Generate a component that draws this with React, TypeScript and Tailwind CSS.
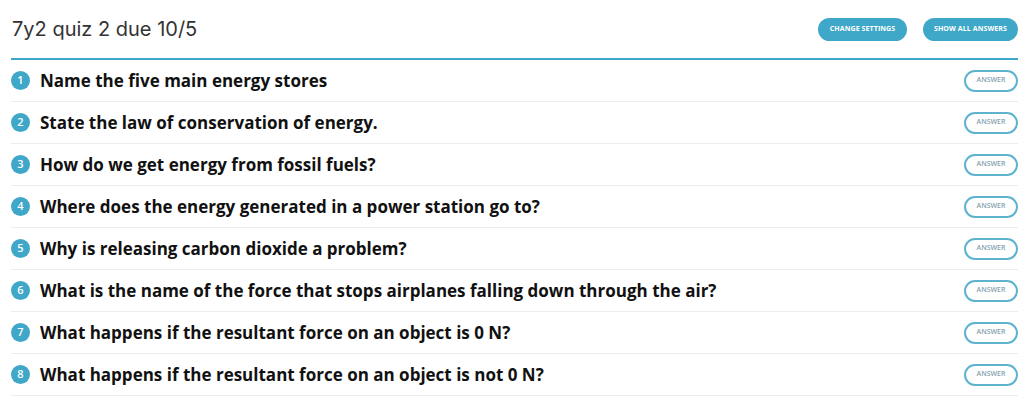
import React from 'react';

const questions = [
  'Name the five main energy stores',
  'State the law of conservation of energy.',
  'How do we get energy from fossil fuels?',
  'Where does the energy generated in a power station go to?',
  'Why is releasing carbon dioxide a problem?',
  'What is the name of the force that stops airplanes falling down through the air?',
  'What happens if the resultant force on an object is 0 N?',
  'What happens if the resultant force on an object is not 0 N?',
];

export default function App() {
  return (
    <div className="min-h-screen bg-white pl-[11px] pr-[6px]" style={{ fontFamily: '"Open Sans", sans-serif' }}>
      {/* header */}
      <div className="flex h-[60px] items-center justify-between border-b-2 border-[#3fa7c8]">
        <h1 className="pl-[1px] text-[20px] font-normal text-[#333]" style={{ fontFamily: 'Inter, sans-serif' }}>
          7y2 quiz 2 due 10/5
        </h1>
        <div className="flex gap-4">
          <button className="h-[23px] w-[89px] rounded-full bg-[#3fa7c8] text-[7px] font-bold tracking-[0.1px] text-white">
            CHANGE SETTINGS
          </button>
          <button className="h-[23px] w-[95px] rounded-full bg-[#3fa7c8] text-[7px] font-bold tracking-[0.1px] text-white">
            SHOW ALL ANSWERS
          </button>
        </div>
      </div>

      {/* questions */}
      <div>
        {questions.map((q, i) => (
          <div key={i} className="flex h-[42px] items-center justify-between border-b border-[#ececec]">
            <div className="flex items-center gap-[10px]">
              <span className="flex h-[19px] w-[19px] items-center justify-center rounded-full bg-[#3fa7c8] text-[11px] font-semibold text-white">
                {i + 1}
              </span>
              <span className="text-[17px] font-bold text-[#111]">{q}</span>
            </div>
            <button className="h-[22px] w-[54px] rounded-full border-2 border-[#5eb3cf] bg-white text-[7px] font-semibold text-[#84a3b0]">
              ANSWER
            </button>
          </div>
        ))}
      </div>
    </div>
  );
}
